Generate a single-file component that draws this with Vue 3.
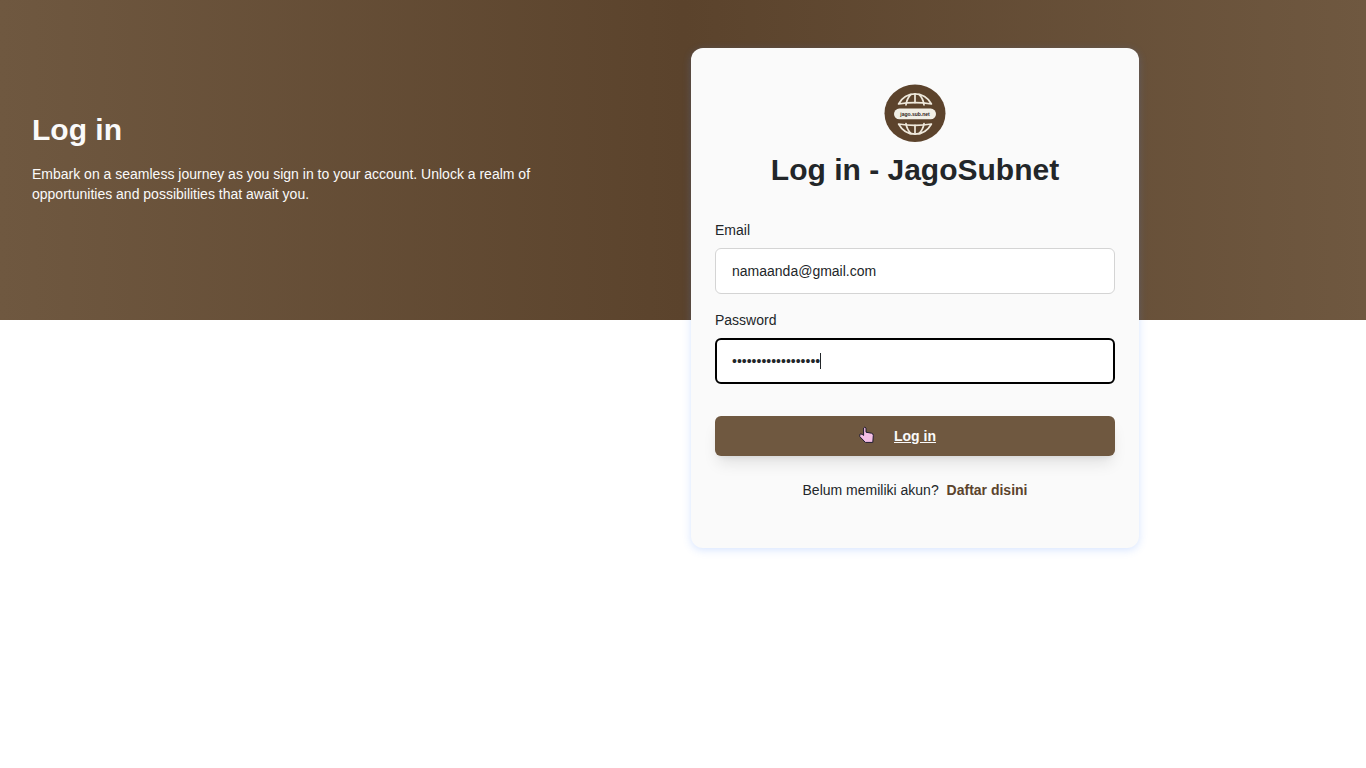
<script setup>
import { ref, onMounted } from 'vue'

const email = ref('namaanda@gmail.com')
const password = ref('kata-sandi-rahasia')
const passwordInput = ref(null)

onMounted(() => {
  const el = passwordInput.value
  el.focus()
  el.setSelectionRange(el.value.length, el.value.length)
})
</script>

<template>
  <main class="page">
    <section class="intro">
      <h1 class="title">Log in</h1>
      <p class="lead">
        Embark on a seamless journey as you sign in to your account. Unlock a realm of opportunities and possibilities that await you.
      </p>
    </section>

    <section class="panel">
      <div class="card">
        <header class="brand">
          <svg class="logo" viewBox="0 0 62 58" role="img" aria-label="jago.sub.net">
            <ellipse cx="31" cy="29.3" rx="30.5" ry="28.7" fill="#5c432c" />
            <g fill="none" stroke="#efe9dc" stroke-width="1.7" stroke-linejoin="round" stroke-linecap="round">
              <path d="M14.6 20C22 6.500 40 6.500 47.400 20C37 18.200 25 18.200 14.600 20Z" />
              <path d="M31 10V18.600M22 20.800C22.500 17 24.500 12.800 27 10.400M40 20.800C39.500 17 37.500 12.800 35 10.400" />
              <path d="M14.600 40C22 53.500 40 53.500 47.400 40C37 41.800 25 41.800 14.600 40Z" />
              <path d="M31 41.400V50M22 39.600C22.500 43 24.500 47 27 49.600M40 39.600C39.500 43 37.500 47 35 49.600" />
            </g>
            <rect x="10" y="24.600" width="42" height="10.600" rx="5.300" fill="#f1efe6" />
            <text class="logo-text" x="31" y="31.600" text-anchor="middle">jago.sub.net</text>
          </svg>
          <h2 class="title">Log in - JagoSubnet</h2>
        </header>

        <form @submit.prevent>
          <div class="field">
            <label for="email">Email</label>
            <input id="email" v-model="email" type="email" autocomplete="off" />
          </div>
          <div class="field">
            <label for="password">Password</label>
            <div class="secret">
              <input id="password" ref="passwordInput" v-model="password" type="password" autocomplete="off" />
              <span class="caret" aria-hidden="true"></span>
            </div>
          </div>
          <button class="submit" type="submit">
            Log in
            <svg class="pointer" viewBox="0 0 16 18" aria-hidden="true">
              <path d="M4.600 2Q5.800 0.300 7 2V6.200L12.500 7.200Q14.300 7.600 14.300 9.400L13.800 16.400H6.400L0.800 10.600V8.400Q1.800 7.400 3.200 8.400L4.600 9.400Z" fill="#f5bfe6" stroke="#1e1b2e" stroke-width="1" stroke-linejoin="round" />
            </svg>
          </button>
        </form>

        <p class="signup">Belum memiliki akun? <a href="#">Daftar disini</a></p>
      </div>
    </section>
  </main>
</template>

<style>
body {
  margin: 0;
  background: #fff;
}
</style>

<style scoped>
.page {
  display: grid;
  grid-template-columns: 1fr 1fr;
  align-items: start;
  color: #222629;
  font: 14px/20px "Liberation Sans", Arial, sans-serif;
  background: linear-gradient(to right, #6f5840, #5b432c, #6f5840) top / 100% 320px no-repeat;
}

.intro {
  padding: 112px 32px 0;
  color: #fafafa;
}

.title {
  margin: 0;
  font-size: 30px;
  line-height: 36px;
  font-weight: 700;
}

.lead {
  max-width: 512px;
  margin: 16px 0 0;
}

.panel {
  padding: 48px 8px;
}

.card {
  box-sizing: border-box;
  max-width: 448px;
  padding: 36px 24px 48px;
  border-radius: 12px;
  background: #fafafa;
  box-shadow: 0 2px 8px rgba(70, 130, 255, 0.22);
}

.brand {
  display: flex;
  flex-direction: column;
  align-items: center;
  gap: 10px;
  margin-bottom: 32px;
}

.logo {
  display: block;
  width: 62px;
  height: 58px;
}

.logo-text {
  font: 700 5px "Liberation Sans", Arial, sans-serif;
  fill: #2e2219;
}

.field {
  display: flex;
  flex-direction: column;
  gap: 8px;
  margin-bottom: 16px;
}

.field input {
  display: block;
  box-sizing: border-box;
  width: 100%;
  height: 46px;
  padding: 0 16px;
  border: 1px solid #d4d4d4;
  border-radius: 6px;
  background: #fff;
  color: #222629;
  font: inherit;
}

.field input:focus {
  padding: 0 15px;
  border: 2px solid #000;
  outline: none;
}

.secret {
  position: relative;
}

.secret input {
  caret-color: transparent;
}

.caret {
  position: absolute;
  top: 15px;
  left: 105px;
  width: 1px;
  height: 16px;
  background: #222629;
}

.submit {
  position: relative;
  display: block;
  width: 100%;
  height: 40px;
  margin: 32px 0 24px;
  padding: 0;
  border: 0;
  border-radius: 6px;
  background: #6f5840;
  box-shadow: 0 10px 15px -3px rgba(0, 0, 0, 0.1), 0 4px 6px -4px rgba(0, 0, 0, 0.1);
  color: #fafafa;
  font: inherit;
  font-weight: 700;
  text-decoration: underline;
}

.pointer {
  position: absolute;
  top: 10px;
  left: 36%;
  width: 16px;
  height: 18px;
}

.signup {
  margin: 0;
  text-align: center;
}

.signup a {
  margin-left: 4px;
  color: #5b432c;
  font-weight: 700;
  text-decoration: none;
}
</style>
